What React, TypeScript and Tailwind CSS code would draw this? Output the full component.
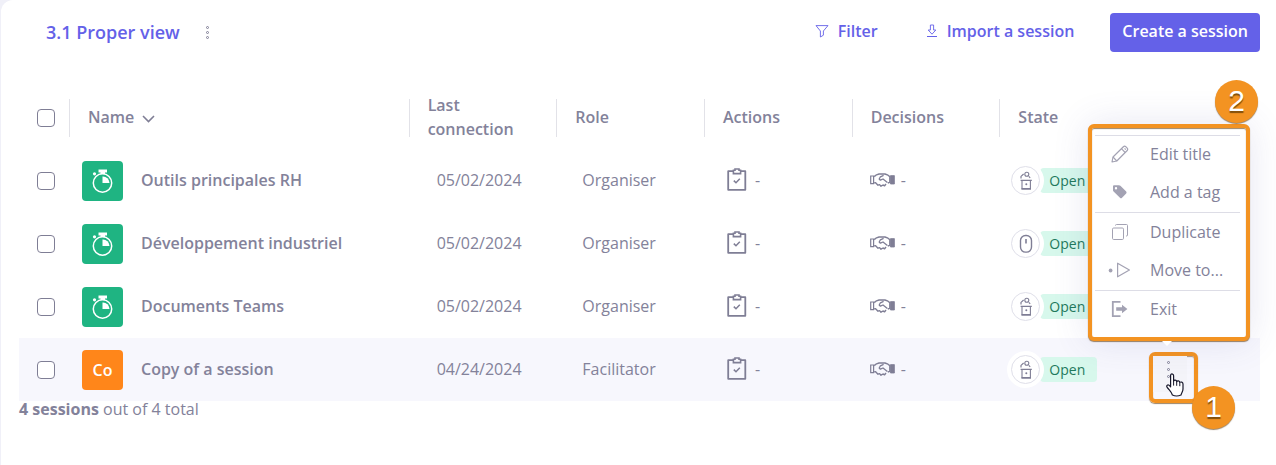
import type { ReactNode } from "react";

type Session = {
  name: string;
  date: string;
  role: string;
  mode: "speaker" | "mouse";
  initials?: string;
};

const sessions: Session[] = [
  {
    name: "Outils principales RH",
    date: "05/02/2024",
    role: "Organiser",
    mode: "speaker",
  },
  {
    name: "Développement industriel",
    date: "05/02/2024",
    role: "Organiser",
    mode: "mouse",
  },
  {
    name: "Documents Teams",
    date: "05/02/2024",
    role: "Organiser",
    mode: "speaker",
  },
  {
    name: "Copy of a session",
    date: "04/24/2024",
    role: "Facilitator",
    mode: "speaker",
    initials: "Co",
  },
];

const StopwatchIcon = () => (
  <svg width="24" height="26" viewBox="0 0 24 26" fill="none">
    <circle cx="11.5" cy="15" r="9.2" stroke="white" strokeWidth="1.5" />
    <path d="M11.5 15V8.5A6.5 6.5 0 0 1 18.5 15Z" fill="white" />
    <path d="M7.5 1.5H16V4.5H7.5Z" fill="white" />
    <path d="M9.5 4H14V6H9.5Z" fill="white" />
    <circle cx="3.5" cy="5.8" r="1.6" fill="white" />
  </svg>
);

const ClipboardIcon = () => (
  <svg width="20" height="24" viewBox="0 0 20 24" fill="none">
    <path
      d="M6 3.2H1.2V21.8H18.3V3.2H14"
      stroke="#7f7e95"
      strokeWidth="1.8"
      strokeLinejoin="round"
    />
    <path d="M6.4 5.6V2.2H8V1H12V2.2H13.6V5.6Z" stroke="#7f7e95" strokeWidth="1.6" />
    <path d="M6.8 12.6L9 14.8L12.8 10.8" stroke="#7f7e95" strokeWidth="1.5" />
  </svg>
);

const HandshakeIcon = () => (
  <svg width="25" height="14" viewBox="0 0 25 14" fill="none" stroke="#7f7e95">
    <path d="M0.7 3H3.6V10.6H0.7Z" strokeWidth="1.2" />
    <path d="M20.5 2.6H24.4V11H20.5Z" fill="#7f7e95" strokeWidth="0.8" />
    <path
      d="M4.2 3.6L6.5 1.8L9 1H15L18 2.2L19.8 3.6V9.4L17.8 10M4.2 9.8H5.6L8 12.2L9.6 11.6L11 13.2L13 12L14.6 12.8L16 11"
      strokeWidth="1.4"
      strokeLinejoin="round"
    />
    <path
      d="M13.6 2.4L10.4 3.8L9.2 6L10.4 7.2L13 6L17.4 9.4"
      strokeWidth="1.3"
      strokeLinejoin="round"
    />
  </svg>
);

const SpeakerIcon = () => (
  <svg width="14" height="20" viewBox="0 0 14 20" fill="none" stroke="#7f7e95">
    <circle cx="7.8" cy="3.2" r="2" strokeWidth="1.1" />
    <path d="M2 7.6V5.4L4.6 3M9.8 5.4L11.2 6.8" strokeWidth="1.2" />
    <path d="M3 9.5V17.5H11.4V9.5" strokeWidth="1.1" />
    <path d="M1.6 9.4H12.8M2.4 18H12" strokeWidth="1.3" />
    <circle cx="7.3" cy="13.2" r="1" fill="#7f7e95" stroke="none" />
  </svg>
);

const MouseIcon = () => (
  <svg width="14" height="20" viewBox="0 0 14 20" fill="none" stroke="#7f7e95">
    <rect x="1.5" y="1.5" width="11" height="16.6" rx="5" strokeWidth="1.4" />
    <path d="M7 5V9.6" strokeWidth="1.6" />
  </svg>
);

const FilterIcon = () => (
  <svg width="14" height="14" viewBox="0 0 14 14" fill="none">
    <path
      d="M1 1.6H13L8.4 7V11.2L5.4 13V7Z"
      stroke="#6461e8"
      strokeWidth="0.9"
      strokeLinejoin="round"
    />
  </svg>
);

const ImportIcon = () => (
  <svg width="12" height="14" viewBox="0 0 12 14" fill="none" stroke="#6461e8">
    <path
      d="M4.4 1H7.6V6H9.8L6 10.2L2.2 6H4.4Z"
      strokeWidth="0.9"
      strokeLinejoin="round"
    />
    <path d="M1 12.5H11" strokeWidth="1" />
  </svg>
);

const PencilIcon = () => (
  <svg width="24" height="18" viewBox="0 0 24 18" fill="none" stroke="#a3a2b3">
    <path
      d="M4 17L5 12L15.4 1.7Q16.6 0.6 17.8 1.7L19.2 3.1Q20.2 4.3 19.2 5.5L8.8 16Z"
      strokeWidth="1.2"
      strokeLinejoin="round"
    />
    <path d="M13.4 3.7L17.2 7.5M5 12L8.8 16M16.6 3.4L17.8 4.6" strokeWidth="1.1" />
  </svg>
);

const TagIcon = () => (
  <svg width="24" height="18" viewBox="0 0 24 18">
    <path
      d="M5 3.2Q5 2.2 6 2.2H11Q11.8 2.2 12.4 2.8L18.2 8.6Q19 9.5 18.2 10.4L13.8 15Q13 15.7 12.2 15L5.6 8.6Q5 8 5 7.2ZM8 6.5A1.2 1.2 0 1 0 8 4.1A1.2 1.2 0 1 0 8 6.5Z"
      fill="#a3a2b3"
      fillRule="evenodd"
    />
  </svg>
);

const DuplicateIcon = () => (
  <svg width="24" height="18" viewBox="0 0 24 18" fill="none" stroke="#a3a2b3">
    <rect x="4.5" y="5" width="11" height="11.5" rx="1.2" />
    <path d="M7.5 2.6V2.5Q7.5 1.5 8.5 1.5H18.5Q19.5 1.5 19.5 2.5V12Q19.5 13 18.5 13H18" />
  </svg>
);

const MoveIcon = () => (
  <svg width="24" height="18" viewBox="0 0 24 18" fill="none">
    <circle cx="2.6" cy="9.5" r="1.9" fill="#a3a2b3" />
    <path
      d="M9.6 2.2V15.8L21.4 9Z"
      stroke="#a3a2b3"
      strokeWidth="1.2"
      strokeLinejoin="round"
    />
  </svg>
);

const ExitIcon = () => (
  <svg width="24" height="18" viewBox="0 0 24 18" fill="none">
    <path d="M12.5 1.8H4.8V16.2H12.5" stroke="#a3a2b3" strokeWidth="1.8" />
    <path d="M8.2 7.2H14V4.8L19.4 9L14 13.2V10.8H8.2Z" fill="#a3a2b3" />
  </svg>
);

const HandCursor = () => (
  <svg width="18" height="24" viewBox="0 0 18 24">
    <path
      d="M5 1.2C6.2 0.6 7.6 1.2 7.6 2.8V8C8 6.8 10.4 6.8 10.7 8.6C11.4 7.4 13.6 7.8 13.8 9.4C14.8 8.6 17 9 17 11V16C17 18.4 15.6 19.6 15 22Q10.5 24 6.4 22C5.6 19 3.6 17.6 1.2 14.4C0 12.8 1.6 11.4 3 12.2L4.6 13.8V2.4Z"
      fill="white"
      stroke="#17172b"
      strokeWidth="1.2"
      strokeLinejoin="round"
    />
    <path d="M7.6 8V12.6M10.7 8.6V12.8M13.8 9.4V13.2" stroke="#17172b" />
  </svg>
);

const HeaderCell = ({ children }: { children: ReactNode }) => (
  <div className="flex h-[38px] items-center border-l border-[#e2e2e8] pb-0.5 pl-[18px] leading-6">
    {children}
  </div>
);

const MenuItem = ({ icon, label }: { icon: ReactNode; label: string }) => (
  <button
    role="menuitem"
    className="flex h-[38px] w-full items-center gap-[18px] pb-0.5 pl-[13px] text-left"
  >
    {icon}
    {label}
  </button>
);

const StepBadge = ({ step }: { step: number }) => (
  <span className="flex size-[43px] items-center justify-center rounded-full bg-[#f39322] pb-0.5 font-['Liberation_Sans',sans-serif] text-3xl text-white shadow-[0_1px_1px_rgba(90,50,0,0.6)] text-shadow-[0_2px_1px_rgba(80,50,0,0.7)]">
    {step}
  </span>
);

const RowMenu = () => (
  <div className="relative h-[63px]">
    <div className="absolute top-[14px] left-0.5 h-[51px] w-[49px] rounded-md border-4 border-[#f39322] shadow-[0_1px_1px_rgba(90,50,0,0.6),inset_0_1px_1px_rgba(90,50,0,0.5)]">
      <button
        aria-label="Session options"
        className="flex h-9 w-[34px] flex-col items-center gap-1 bg-[#f4f4f9] pt-[5px] pr-1"
      >
        <span className="size-[3px] rounded-full border border-[#7f7e95]" />
        <span className="size-[3px] rounded-full border border-[#7f7e95]" />
        <span className="size-[3px] rounded-full border border-[#7f7e95]" />
      </button>
      <div className="absolute top-[17px] left-[13px]">
        <HandCursor />
      </div>
    </div>
    <div className="absolute top-12 left-[45px] z-20">
      <StepBadge step={1} />
    </div>
    <div className="absolute right-2.5 bottom-[60px] z-10 w-[162px] rounded-md border-4 border-[#f39322] bg-white pt-[7px] pr-1.5 pb-2 pl-[3px] shadow-[0_1px_1px_rgba(90,50,0,0.6),0_0_36px_rgba(80,80,160,0.14),inset_0_1px_1px_rgba(90,50,0,0.6)]">
      <div role="menu">
        <div className="border-t border-[#dddde6]">
          <MenuItem icon={<PencilIcon />} label="Edit title" />
          <MenuItem icon={<TagIcon />} label="Add a tag" />
        </div>
        <div className="border-t border-[#dddde6] pt-px">
          <MenuItem icon={<DuplicateIcon />} label="Duplicate" />
          <MenuItem icon={<MoveIcon />} label="Move to..." />
        </div>
        <div className="border-t border-[#dddde6]">
          <MenuItem icon={<ExitIcon />} label="Exit" />
        </div>
      </div>
      <div className="absolute -bottom-[9px] left-[70px] border-x-5 border-t-5 border-x-transparent border-t-white" />
      <div className="absolute -top-12 -right-3">
        <StepBadge step={2} />
      </div>
    </div>
  </div>
);

const checkboxClass =
  "block size-[18px] appearance-none rounded-sm border border-[#7f7e95] bg-white checked:bg-[#6461e8]";

const App = () => {
  return (
    <div className="min-h-screen bg-[#f0f0f8] pl-px font-['Open_Sans',sans-serif] text-base text-[#83829a]">
      <main className="min-h-screen rounded-tl-xl bg-white pt-[13px] pr-4 pl-[18px]">
        <header className="flex h-[39px] items-center justify-between">
          <div className="flex items-center gap-5 pl-[27px]">
            <h1 className="pb-0.5 text-lg font-semibold text-[#6461e8]">
              3.1 Proper view
            </h1>
            <button
              aria-label="View options"
              className="flex w-4 flex-col items-center gap-0.5"
            >
              <span className="size-[3px] rounded-full border border-[#7f7e95]" />
              <span className="size-[3px] rounded-full border border-[#7f7e95]" />
              <span className="size-[3px] rounded-full border border-[#7f7e95]" />
            </button>
          </div>
          <div className="flex items-center font-semibold text-[#6461e8]">
            <button className="mr-12 flex items-center gap-[9px] pb-[3px]">
              <FilterIcon />
              Filter
            </button>
            <button className="mr-9 flex items-center gap-[9px] pb-[3px]">
              <ImportIcon />
              Import a session
            </button>
            <button className="h-[39px] rounded bg-[#6461e8] px-3 pb-[3px] text-white">
              Create a session
            </button>
          </div>
        </header>
        <table className="mt-[35px] w-full table-fixed text-left">
          <thead>
            <tr className="h-[62px]">
              <th className="w-[50px] pl-[18px]">
                <input
                  type="checkbox"
                  aria-label="Select all"
                  className={checkboxClass}
                />
              </th>
              <th className="font-[550]">
                <HeaderCell>
                  <button className="flex items-center gap-2">
                    Name
                    <svg
                      width="13"
                      height="8"
                      viewBox="0 0 13 8"
                      fill="none"
                      className="mt-1"
                    >
                      <path
                        d="M1 1L6.5 6.5L12 1"
                        stroke="#7f7e95"
                        strokeWidth="1.6"
                      />
                    </svg>
                  </button>
                </HeaderCell>
              </th>
              <th className="w-[11.9%] font-[550]">
                <HeaderCell>
                  Last
                  <br />
                  connection
                </HeaderCell>
              </th>
              <th className="w-[11.9%] font-[550]">
                <HeaderCell>Role</HeaderCell>
              </th>
              <th className="w-[11.9%] font-[550]">
                <HeaderCell>Actions</HeaderCell>
              </th>
              <th className="w-[11.9%] font-[550]">
                <HeaderCell>Decisions</HeaderCell>
              </th>
              <th className="w-[11.9%] font-[550]">
                <HeaderCell>State</HeaderCell>
              </th>
              <th className="w-[113px]" />
            </tr>
          </thead>
          <tbody>
            {sessions.map((s) => (
              <tr
                key={s.name}
                className={`h-[63px] ${s.initials ? "bg-[#f7f7fd]" : ""}`}
              >
                <td className="pl-[18px]">
                  <input
                    type="checkbox"
                    aria-label={s.name}
                    className={checkboxClass}
                  />
                </td>
                <td className="pl-[13px]">
                  <div className="flex items-center gap-[18px] font-[550]">
                    <span
                      className={`flex h-10 w-[41px] items-center justify-center rounded text-white ${
                        s.initials ? "bg-[#ff861a] font-semibold" : "bg-[#1fb482]"
                      }`}
                    >
                      {s.initials ?? <StopwatchIcon />}
                    </span>
                    <span className="pb-0.5">{s.name}</span>
                  </div>
                </td>
                <td className="pb-0.5 pl-7">{s.date}</td>
                <td className="pb-0.5 pl-[26px]">{s.role}</td>
                <td className="pb-0.5 pl-[23px]">
                  <div className="flex items-center gap-2">
                    <ClipboardIcon />-
                  </div>
                </td>
                <td className="pb-0.5 pl-[18px]">
                  <div className="flex items-center gap-1.5">
                    <HandshakeIcon />-
                  </div>
                </td>
                <td className="pl-2">
                  <div className="flex items-center">
                    <span className="z-1 flex size-[37px] items-center justify-center rounded-full border-4 border-white bg-white">
                      <span className="flex size-[29px] items-center justify-center rounded-full border border-[#dfdfe9]">
                        {s.mode === "mouse" ? <MouseIcon /> : <SpeakerIcon />}
                      </span>
                    </span>
                    <span className="-ml-1 flex h-[25px] items-center rounded bg-[#d7f8ec] pr-3 pl-[9px] text-sm text-[#1f7a5c]">
                      Open
                    </span>
                  </div>
                </td>
                <td>{s.initials && <RowMenu />}</td>
              </tr>
            ))}
          </tbody>
        </table>
        <p className="leading-4">
          <b className="font-bold">4 sessions</b> out of 4 total
        </p>
      </main>
    </div>
  );
};

export default App;
